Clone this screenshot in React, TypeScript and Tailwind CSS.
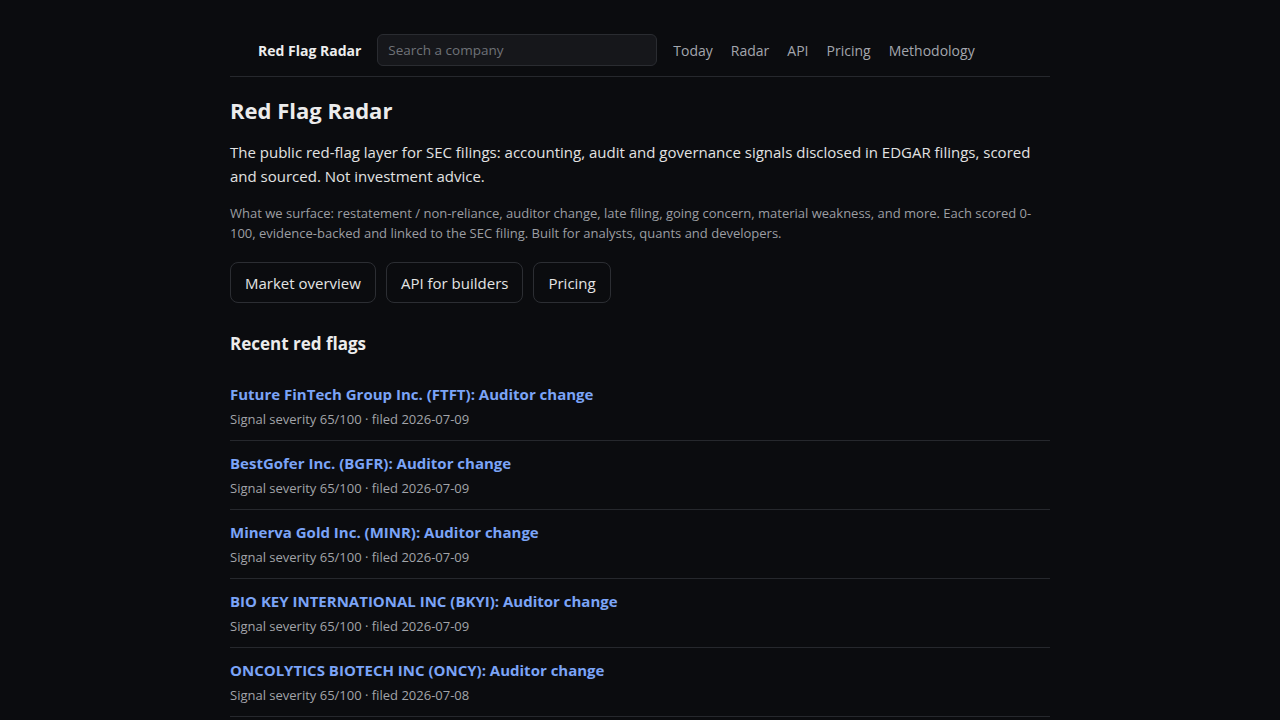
const navLinks = ['Today', 'Radar', 'API', 'Pricing', 'Methodology']

const flags = [
  { title: 'Future FinTech Group Inc. (FTFT): Auditor change', date: '2026-07-09' },
  { title: 'BestGofer Inc. (BGFR): Auditor change', date: '2026-07-09' },
  { title: 'Minerva Gold Inc. (MINR): Auditor change', date: '2026-07-09' },
  { title: 'BIO KEY INTERNATIONAL INC (BKYI): Auditor change', date: '2026-07-09' },
  { title: 'ONCOLYTICS BIOTECH INC (ONCY): Auditor change', date: '2026-07-08' },
]

export default function App() {
  return (
    <div
      className="min-h-screen bg-[#0b0c0f] text-[#e6e6e6]"
      style={{ fontFamily: '"Open Sans", "Noto Sans", sans-serif' }}
    >
      <div className="mx-auto w-[820px] pt-6">
        {/* top nav */}
        <nav className="flex items-center gap-4 border-b border-[#26282d] py-2.5">
          <a className="ml-7 text-[14px] font-bold text-[#ededed]">Red Flag Radar</a>
          <input
            placeholder="Search a company"
            className="h-8 w-[280px] rounded-md border border-[#2a2c31] bg-[#16171b] px-[10px] text-[13.5px] text-[#ddd] placeholder:text-[#6f7278] outline-none"
          />
          <div className="flex items-center gap-[18px]">
            {navLinks.map((l) => (
              <a key={l} className="text-[14px] text-[#a3a6ad]">
                {l}
              </a>
            ))}
          </div>
        </nav>

        <h1 className="mt-[17px] text-[22px] leading-8 font-bold text-[#ececec]">Red Flag Radar</h1>
        <p className="mt-[14px] text-[15px] leading-6 text-[#e2e2e2]">
          The public red-flag layer for SEC filings: accounting, audit and governance signals disclosed in EDGAR
          filings, scored and sourced. Not investment advice.
        </p>
        <p className="mt-[15px] text-[13px] leading-5 text-[#9c9ea3]">
          What we surface: restatement / non-reliance, auditor change, late filing, going concern, material weakness,
          and more. Each scored 0-100, evidence-backed and linked to the SEC filing. Built for analysts, quants and
          developers.
        </p>

        <div className="mt-[19px] flex gap-[10px]">
          {['Market overview', 'API for builders', 'Pricing'].map((b) => (
            <a
              key={b}
              className="flex h-[41px] items-center rounded-lg border border-[#2c2e33] px-[14px] pt-px text-[15px] text-[#e4e4e4]"
            >
              {b}
            </a>
          ))}
        </div>

        <h2 className="mt-[27px] text-[17px] leading-7 font-bold text-[#ececec]">Recent red flags</h2>
        <ul className="mt-[14px]">
          {flags.map((f) => (
            <li key={f.title} className="border-b border-[#26282d] pt-[10px] pb-[11px]">
              <a className="block text-[15px] leading-6 font-bold text-[#7ba4f7]">{f.title}</a>
              <div className="mt-[3px] text-[13px] leading-5 text-[#a2a4a9]">
                Signal severity 65/100 · filed {f.date}
              </div>
            </li>
          ))}
        </ul>
      </div>
    </div>
  )
}
